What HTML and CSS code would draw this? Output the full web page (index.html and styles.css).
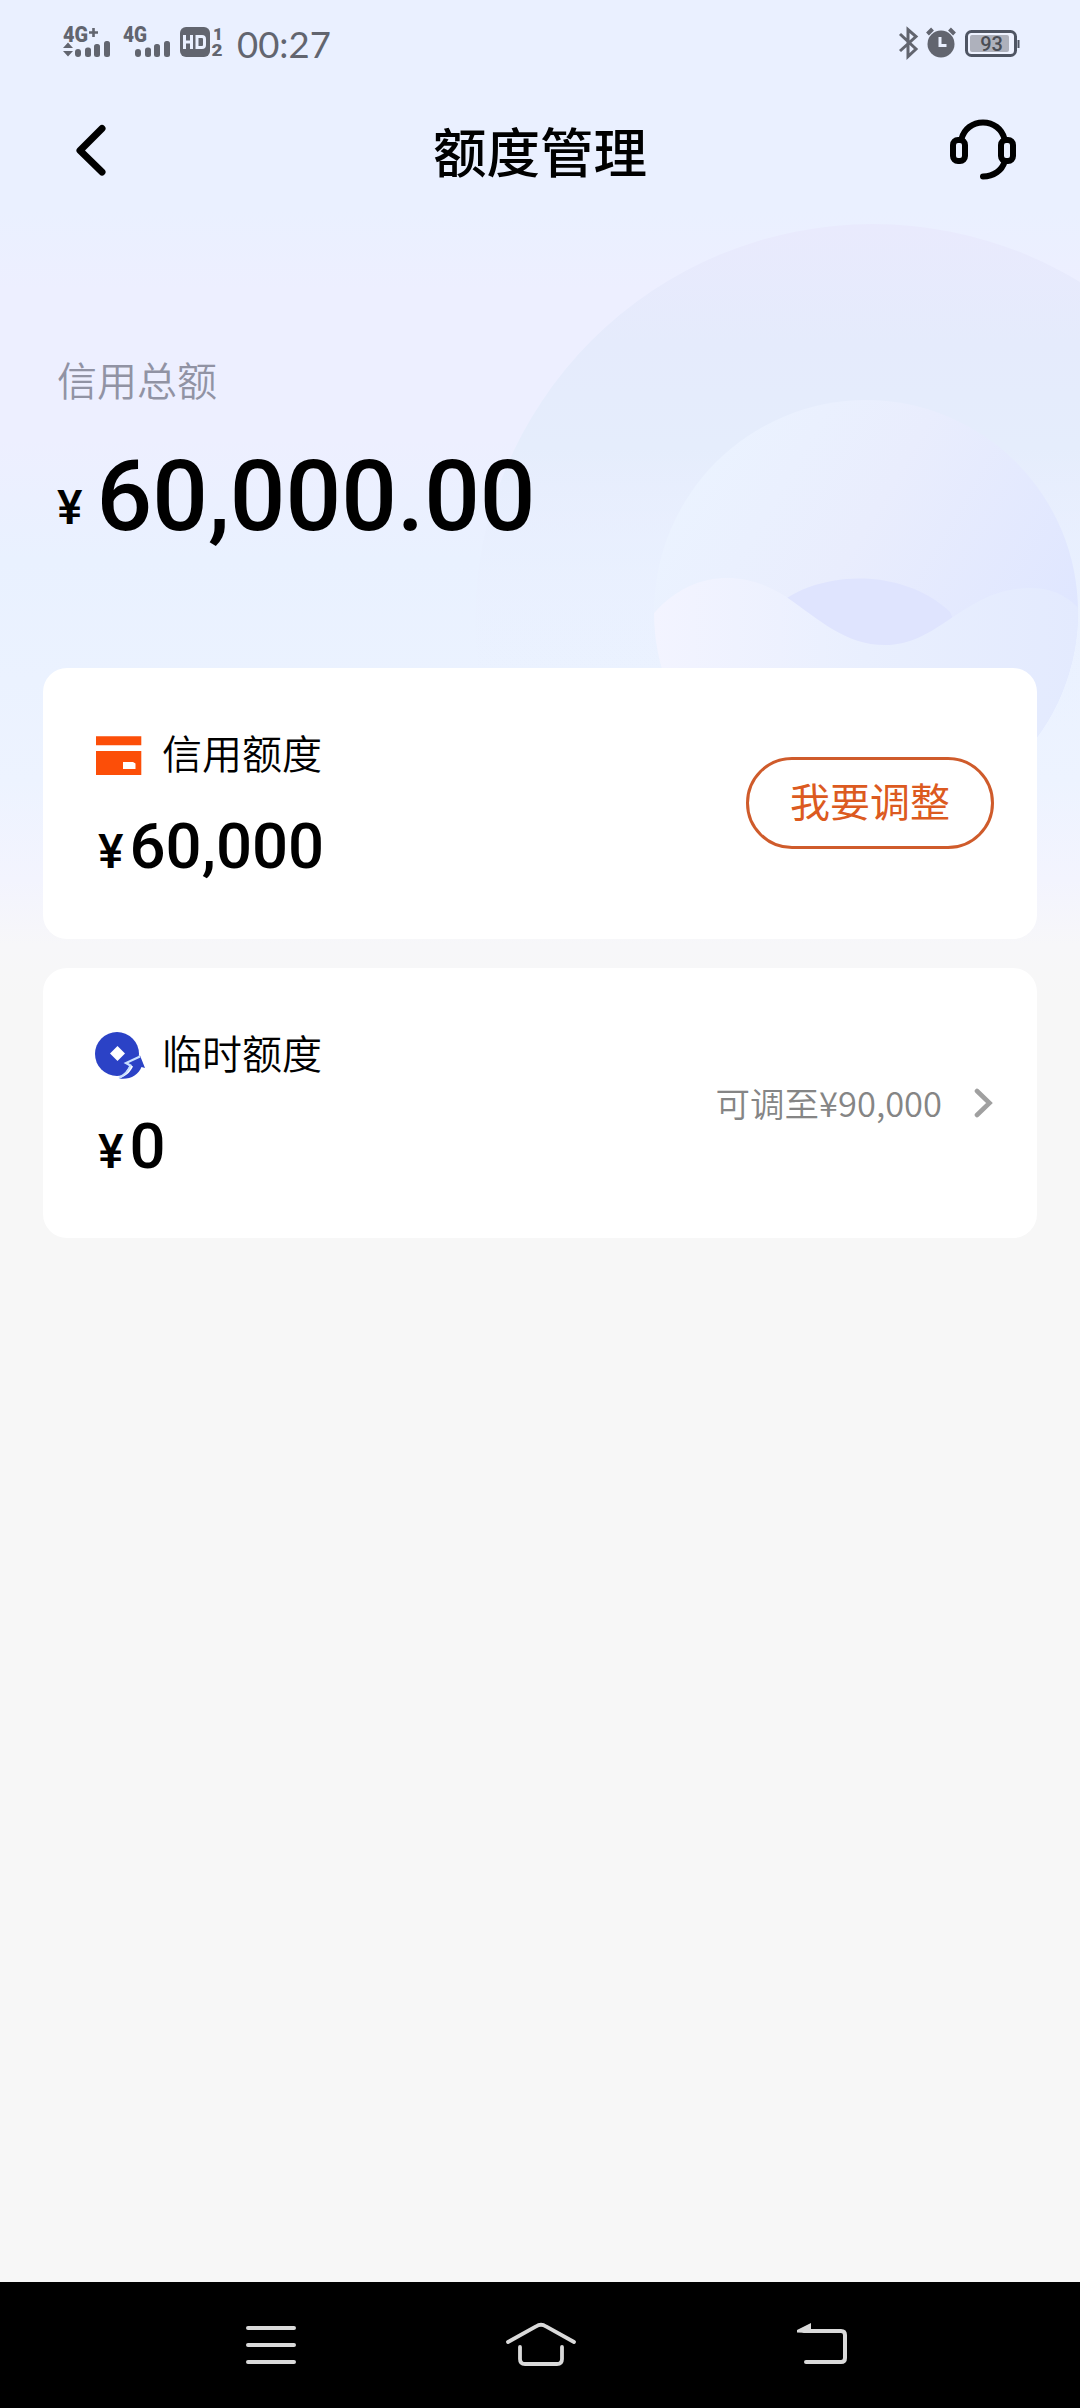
FILE: index.html
```html
<!DOCTYPE html>
<html lang="zh-CN">
<head>
<meta charset="utf-8">
<title>额度管理</title>
<link rel="stylesheet" href="styles.css">
</head>
<body>
<div class="screen">
  <svg class="backdrop" viewBox="0 0 1080 960" aria-hidden="true">
    <defs>
      <linearGradient id="halo" x1="0" y1="0" x2="0" y2="1">
        <stop offset="0" stop-color="#e9eafd"/><stop offset=".15" stop-color="#e5ebfc"/><stop offset=".28" stop-color="#e5edfc"/><stop offset=".45" stop-color="#e9effe" stop-opacity=".4"/><stop offset=".65" stop-color="#eaf2ff" stop-opacity="0"/>
      </linearGradient>
      <linearGradient id="orb" x1=".1" y1=".1" x2=".95" y2=".6">
        <stop offset="0" stop-color="#ebf3ff"/><stop offset=".45" stop-color="#e9edfd"/><stop offset="1" stop-color="#dfe6ff"/>
      </linearGradient>
      <linearGradient id="wave" x1="0" y1="0" x2="1" y2="0">
        <stop offset="0" stop-color="#f3f4ff"/><stop offset=".5" stop-color="#e9effe"/><stop offset="1" stop-color="#e3eafe"/>
      </linearGradient>
      <clipPath id="orbClip"><circle cx="866" cy="612" r="212"/></clipPath>
    </defs>
    <circle cx="873" cy="622" r="398" fill="url(#halo)"/>
    <circle cx="866" cy="612" r="212" fill="url(#orb)"/>
    <g clip-path="url(#orbClip)">
      <path d="M770 612C810 570 900 565 950 612L990 700H770Z" fill="#dfe4fe"/>
      <path d="M650 618C690 568 745 570 785 596C820 620 845 645 885 645C940 645 965 588 1030 588C1050 588 1066 594 1080 610V830H650Z" fill="url(#wave)"/>
    </g>
  </svg>

  <div class="status">
    <svg class="status-signal" viewBox="0 0 162 40" aria-hidden="true">
      <g fill="#62656f">
        <text x="0" y="20" class="net" textLength="25" lengthAdjust="spacingAndGlyphs">4G</text>
        <path d="M26 9.200h3.200V6h2.600v3.200H35v2.600h-3.200V15h-2.600v-3.200H26z"/>
        <path d="M5 20.500l5 5.500H0zM0 29h10l-5 5.500z"/>
        <rect x="12" y="27" width="6" height="8" rx="3"/><rect x="22" y="25.500" width="6" height="9.500" rx="2.500"/><rect x="31" y="22" width="6" height="13" rx="2.500"/><rect x="41" y="19" width="6" height="16" rx="2.500"/>
        <text x="60" y="20" class="net" textLength="24" lengthAdjust="spacingAndGlyphs">4G</text>
        <rect x="72" y="27" width="6" height="8" rx="3"/><rect x="82" y="25.500" width="6" height="9.500" rx="2.500"/><rect x="91" y="22" width="6" height="13" rx="2.500"/><rect x="101" y="19" width="6" height="16" rx="2.500"/>
        <rect x="117" y="5" width="30" height="30" rx="6"/>
        <text x="150" y="17.500" class="sim">1</text>
        <text x="148.500" y="34" class="sim" textLength="11" lengthAdjust="spacingAndGlyphs">2</text>
      </g>
      <path d="M121.500 13v14M128.500 13v14M121.500 20h7M134 14.500h5q2.500 0 2.500 2.500v6q0 2.500-2.500 2.500h-5z" fill="none" stroke="#eaf0ff" stroke-width="3"/>
    </svg>
    <span class="clock">00:27</span>
    <svg class="status-right" viewBox="0 0 124 34" aria-hidden="true">
      <path d="M2 8l16 15-8 7.500V3.500l8 7L2 25" fill="none" stroke="#62656f" stroke-width="3"/>
      <g transform="translate(0 1)">
        <circle cx="43" cy="17" r="13.500" fill="#62656f"/>
        <path d="M29.500 7l5-5M56.500 7l-5-5" stroke="#62656f" stroke-width="4"/>
        <path d="M42 10v8.500h6.500" fill="none" stroke="#eaf0ff" stroke-width="3"/>
      </g>
      <rect x="68.500" y="5.500" width="49" height="24" rx="5" fill="#eef2ff" stroke="#4f5563" stroke-width="3"/>
      <rect x="72" y="9" width="39" height="17" rx="2" fill="#aeb1bc"/>
      <path d="M120.500 14v8" stroke="#4f5563" stroke-width="2"/>
      <text x="93.500" y="25" class="battery" text-anchor="middle">93</text>
    </svg>
  </div>

  <header class="header">
    <svg class="back" viewBox="0 0 59 56" aria-label="返回"><path d="M30 6.500L8 28.500l22 21.500" fill="none" stroke="#000" stroke-width="7" stroke-linecap="round" stroke-linejoin="round"/></svg>
    <h1 class="title">额度管理</h1>
    <svg class="service" viewBox="0 0 70 64" aria-label="客服">
      <g fill="none" stroke="#000" stroke-width="6" stroke-linecap="round">
        <rect x="4" y="22" width="12" height="21" rx="5"/><rect x="52" y="22" width="12" height="21" rx="5"/>
        <path d="M12.500 21C15 11 23.500 4.500 34 4.500s19 6.500 21.500 16.500M55.500 44C53 52 45 58.500 34 58.500"/>
      </g>
    </svg>
  </header>

  <section class="total">
    <div class="total-label">信用总额</div>
    <div class="total-value"><span class="yen">¥</span><span class="total-num">60,000.00</span></div>
  </section>

  <main class="cards">
    <section class="card">
      <div class="info">
        <div class="name">
          <svg class="icon" viewBox="0 0 52 50" aria-hidden="true"><path d="M2 6.300h45.300v9H2zM2 21h45.300v24H2zM29 32v7h12.500v-5.500L39 32z" fill="#fc4e08" fill-rule="evenodd"/></svg>
          <span>信用额度</span>
        </div>
        <div class="amount"><span class="yen">¥</span><span class="num">60,000</span></div>
      </div>
      <button class="adjust">我要调整</button>
    </section>
    <section class="card">
      <div class="info">
        <div class="name">
          <svg class="icon" viewBox="0 0 52 50" aria-hidden="true">
            <circle cx="23" cy="24" r="22" fill="#2b42c6"/>
            <path d="M23.500 16l7.500 7.500-7.500 7.500-7.500-7.500z" fill="#fff"/>
            <path d="M52 24L31.500 33l4 3-6.500 11H52z" fill="#fff"/>
            <path d="M33.500 33L46 25.500l5 12.500-3.500-1C44.500 45 36 50 25 48.500 31 46.500 36 43 39 36.500z" fill="#2b42c6"/>
            <path d="M25 48C30 45 35 40 36.500 35.500L32 33l14-6.500" fill="none" stroke="#c8e0ff" stroke-width="2.200"/>
          </svg>
          <span>临时额度</span>
        </div>
        <div class="amount"><span class="yen">¥</span><span class="num">0</span></div>
      </div>
      <div class="more">
        <span>可调至¥90,000</span>
        <svg class="chevron" viewBox="0 0 20 32" aria-hidden="true"><path d="M3 4l12.500 12L3 28" fill="none" stroke="#a0a0a0" stroke-width="4.600" stroke-linecap="round"/></svg>
      </div>
    </section>
  </main>

  <nav class="nav">
    <svg viewBox="0 0 60 50" class="nav-icon"><path d="M7 8h46M7 25h46M7 42h46" fill="none" stroke="#dadada" stroke-width="4" stroke-linecap="round"/></svg>
    <svg viewBox="0 0 72 50" class="nav-icon nav-home"><path d="M3 22L31 6.500Q36 3 41 6.500L69 22M15 27v12q0 5 5 5h32q5 0 5-5V27" fill="none" stroke="#dadada" stroke-width="3.800" stroke-linecap="round"/></svg>
    <svg viewBox="0 0 60 50" class="nav-icon"><path d="M10 11h37q4 0 4 4v23q0 4-4 4H12" fill="none" stroke="#dadada" stroke-width="4" stroke-linecap="round"/><path d="M3 12.500v-2.500L17 3v10z" fill="#dadada"/></svg>
  </nav>
</div>
</body>
</html>
```
FILE: styles.css
```css
* { box-sizing: border-box; }

body {
  margin: 0;
  font-family: Roboto, "Noto Sans CJK SC", sans-serif;
  color: #000;
}

.screen {
  position: relative;
  display: flex;
  flex-direction: column;
  width: 1080px;
  height: 2408px;
  overflow: hidden;
  background: linear-gradient(#eaf0ff 0, #eaf0ff 210px, #edefff 290px, #edefff 440px, #e9f1ff 560px, #ebf2ff 680px, #edf3ff 780px, #f3f4fe 880px, #f7f7f9 945px, #f7f7f7 1000px);
}

.backdrop {
  position: absolute;
  top: 0;
  left: 0;
  width: 1080px;
  height: 960px;
}

.status, .header, .total, .cards, .nav { position: relative; }

.status {
  display: flex;
  align-items: flex-start;
  height: 80px;
  padding: 22px 58px 0 62.5px;
}
.status-signal { width: 162px; height: 40px; }
.net { font: 900 22px Roboto, sans-serif; }
.sim { font: 900 17px Roboto, sans-serif; }
.clock {
  margin-left: 12.5px;
  font: 400 36.5px/44px Lato, sans-serif;
  color: #62656f;
}
.status-right { width: 124px; height: 34px; margin: 4px 0 0 auto; }
.battery { font: 500 20px Roboto, sans-serif; fill: #4a4d55; }

.header {
  display: flex;
  align-items: center;
  justify-content: space-between;
  height: 140px;
  padding: 0 61px 0 72px;
}
.back { width: 59px; height: 56px; }
.title {
  margin: 10px 0 0;
  font-size: 53.5px;
  font-weight: 500;
  line-height: 70px;
}
.service { width: 70px; height: 64px; }

.total {
  height: 448px;
  padding: 133px 57px 0;
}
.total-label {
  font-size: 40px;
  font-weight: 350;
  line-height: 60px;
  color: #9193a4;
}
.total-value {
  display: flex;
  align-items: baseline;
  margin-top: 26px;
  font-weight: 500;
  line-height: 116px;
}
.yen { font-size: 48px; font-weight: 500; }
.total-num { font-size: 98px; margin-left: 14px; }
.total-value .yen { position: relative; top: -6px; }

.cards {
  display: flex;
  flex-direction: column;
  gap: 29px;
  flex: 1;
  padding: 0 43px;
}
.card {
  display: flex;
  align-items: center;
  justify-content: space-between;
  height: 270.5px;
  padding: 0 43px 0 51px;
  border-radius: 24px;
  background: #fff;
}
.info { padding-top: 8px; }
.name {
  display: flex;
  align-items: center;
  gap: 16px;
  font-size: 40px;
  font-weight: 350;
  line-height: 60px;
}
.name span { padding-top: 2px; }
.icon { width: 52px; height: 50px; }
.amount {
  display: flex;
  align-items: baseline;
  gap: 6px;
  margin-top: 23px;
  padding-left: 4px;
  font-weight: 500;
  line-height: 76px;
}
.num { font-size: 63.5px; }

.adjust {
  width: 248px;
  height: 92px;
  padding: 2px 0 0;
  border: 3px solid #cf5b2b;
  border-radius: 46px;
  background: transparent;
  font: 400 40px/60px Roboto, "Noto Sans CJK SC", sans-serif;
  color: #dc5a20;
}

.more {
  display: flex;
  align-items: center;
  gap: 32px;
  font: 350 34.5px/50px "Noto Sans CJK SC", sans-serif;
  color: #858585;
}
.more span { margin-top: -2px; }
.chevron { width: 20px; height: 32px; }

.nav {
  display: flex;
  align-items: center;
  justify-content: space-between;
  height: 126px;
  padding: 0 226px 0 241px;
  background: #000;
}
.nav-icon { width: 60px; height: 50px; }
.nav-home { width: 72px; margin-right: 14px; }
```
